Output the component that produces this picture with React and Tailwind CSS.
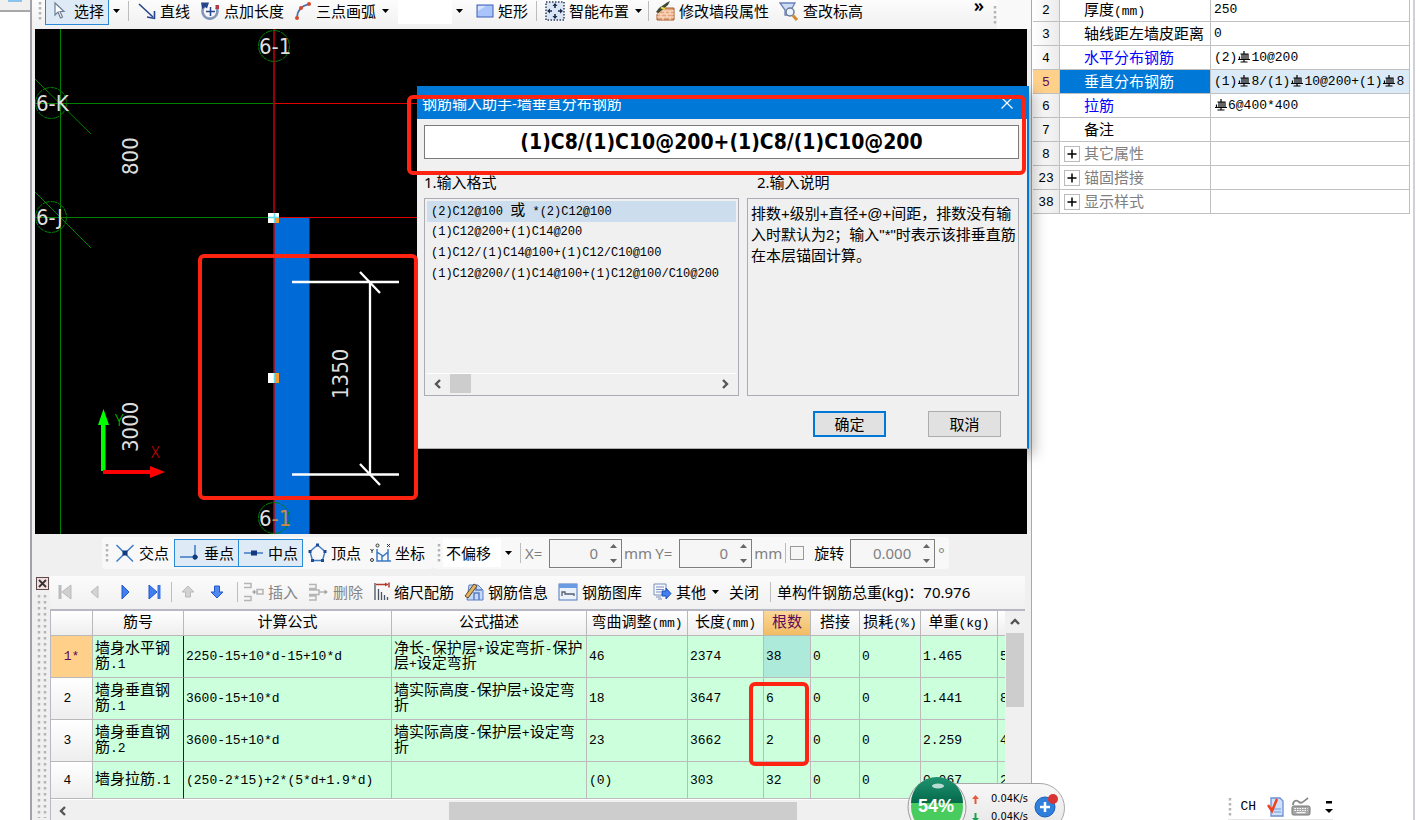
import { useState } from 'react';
import clsx from 'clsx';

const properties = [
  { no: '2', name: '厚度(mm)', value: '250' },
  { no: '3', name: '轴线距左墙皮距离', value: '0' },
  { no: '4', name: '水平分布钢筋', value: '(2)Φ10@200', key: true },
  { no: '5', name: '垂直分布钢筋', value: '(1)Φ8/(1)Φ10@200+(1)Φ8', key: true },
  { no: '6', name: '拉筋', value: 'Φ6@400*400', key: true },
  { no: '7', name: '备注', value: '' },
  { no: '8', name: '其它属性', value: '', group: true },
  { no: '23', name: '锚固搭接', value: '', group: true },
  { no: '38', name: '显示样式', value: '', group: true },
];

const columns = [
  { label: '筋号', width: 'w-[91px]' },
  { label: '计算公式', width: 'w-[208px]' },
  { label: '公式描述', width: 'w-[195px]' },
  { label: '弯曲调整(mm)', width: 'w-[101px]' },
  { label: '长度(mm)', width: 'w-[76px]' },
  { label: '根数', width: 'w-[47px]' },
  { label: '搭接', width: 'w-[49px]' },
  { label: '损耗(%)', width: 'w-[61px]' },
  { label: '单重(kg)', width: 'w-[77px]' },
  { label: '', width: 'w-[20px]' },
];

const bars = [
  ['墙身水平钢筋.1', '2250-15+10*d-15+10*d', '净长-保护层+设定弯折-保护层+设定弯折', '46', '2374', '38', '0', '0', '1.465', '5'],
  ['墙身垂直钢筋.1', '3600-15+10*d', '墙实际高度-保护层+设定弯折', '18', '3647', '6', '0', '0', '1.441', '8'],
  ['墙身垂直钢筋.2', '3600-15+10*d', '墙实际高度-保护层+设定弯折', '23', '3662', '2', '0', '0', '2.259', '4'],
  ['墙身拉筋.1', '(250-2*15)+2*(5*d+1.9*d)', '', '(0)', '303', '32', '0', '0', '0.067', '2'],
];

const formats = [
  '(2)C12@100 或 *(2)C12@100',
  '(1)C12@200+(1)C14@200',
  '(1)C12/(1)C14@100+(1)C12/C10@100',
  '(1)C12@200/(1)C14@100+(1)C12@100/C10@200',
];

/* Latin in a fixed pitch, Chinese at full size, Φ as the rebar grade mark */
function Mixed({ text }) {
  return text.split(/([\u3000-\u9fff]+|Φ)/).map((part, i) => {
    if (part === 'Φ') return <RebarMark key={i} />;
    if (i % 2 === 1) return <span key={i} className="text-[15px]">{part}</span>;
    return part;
  });
}

function RebarMark() {
  return (
    <svg className="inline-block w-[14px] h-[12px] align-[-2px]" viewBox="0 0 14 12" fill="none" stroke="currentColor" strokeWidth="1.2">
      <path d="M7 0v11.500M3.500 3h7.500v5.500M5 3v5.500M9 3v5.500M2.500 5.500v3M1 8.500h12M3.500 11h7" />
    </svg>
  );
}

function Caret({ className }) {
  return (
    <svg className={clsx('w-[7px] h-[4px] shrink-0', className)} viewBox="0 0 7 4">
      <path d="M0 0h7L3.500 4z" fill="#000" />
    </svg>
  );
}

function Chevron({ d }) {
  return (
    <svg className="w-[10px] h-[12px]" viewBox="0 0 10 12" fill="none" stroke="#555" strokeWidth="2.4">
      <path d={d} />
    </svg>
  );
}

function Grip() {
  return (
    <svg className="w-[4px] h-[20px] shrink-0" viewBox="0 0 4 20">
      <path d="M2 1v19" stroke="#b4b4b4" strokeWidth="2.500" strokeDasharray="2.500 2.500" />
    </svg>
  );
}

function Sep({ className }) {
  return <span className={clsx('w-px h-[20px] bg-[#bdbdbd] shrink-0', className)} />;
}

function Tool({ icon, label, active, caret, disabled, className }) {
  return (
    <button
      type="button"
      disabled={disabled}
      className={clsx(
        'flex items-center gap-[4px] h-[28px] px-[4px] border shrink-0 whitespace-nowrap',
        active ? 'bg-[#deebf6] border-[#2a8ad8]' : 'border-transparent',
        disabled && 'text-[#858585]',
        className,
      )}
    >
      {icon}
      {label && <span>{label}</span>}
      {caret && <Caret className="ml-[2px]" />}
    </button>
  );
}

function Icon({ children, w = 20 }) {
  return (
    <svg className="h-[20px] shrink-0" width={w} height="20" viewBox={`0 0 ${w} 20`} fill="none">
      {children}
    </svg>
  );
}

const icons = {
  pointer: (
    <Icon w={20}>
      <path d="M5 2v12l3-3 2.500 6 2-1-2.500-5.500h4z" fill="#fff" stroke="#6f7f95" strokeWidth="1.200" />
    </Icon>
  ),
  line: (
    <Icon w={18}>
      <path d="M1 3L15 16" stroke="#27458c" strokeWidth="1.600" />
      <path d="M17 17.500l-8-1.500M16.500 18V10" stroke="#27458c" strokeWidth="1.600" />
    </Icon>
  ),
  pointLength: (
    <Icon w={20}>
      <path d="M4.500 5a7.500 7.500 0 1 0 12 1.500" stroke="#8496b8" strokeWidth="2.600" />
      <path d="M1 1.500h8l-2 6-2-1.500-3 2z" fill="#27458c" />
      <path d="M10.500 6v9M6 10.500h9" stroke="#27458c" strokeWidth="1.500" />
      <rect x="15.500" y="4" width="3.500" height="4" fill="#b23a4a" />
    </Icon>
  ),
  arc: (
    <Icon w={18}>
      <path d="M3 17C3 9 7 5 15 3" stroke="#4a6cb0" strokeWidth="1.500" />
      <circle cx="3" cy="17" r="2" fill="#d8482c" />
      <circle cx="7" cy="7" r="2" fill="#d8482c" />
      <circle cx="15" cy="3" r="2" fill="#d8482c" />
    </Icon>
  ),
  rect: (
    <Icon w={18}>
      <rect x="1" y="4" width="16" height="12" fill="#a9c4fb" stroke="#3e5fb8" />
      <path d="M2 10l8-5H2z" fill="#d5e3ff" />
    </Icon>
  ),
  smart: (
    <Icon w={20}>
      <rect x="1" y="1" width="18" height="18" fill="#dbe6f5" stroke="#33405c" strokeWidth="1.500" strokeDasharray="1.500 1.500" />
      <path d="M10 3v4M10 13v4M3 10h4M13 10h4" stroke="#1d2c50" strokeWidth="1.600" />
      <path d="M10 2l2.500 3h-5zM10 18l2.500-3h-5zM2 10l3-2.500v5zM18 10l-3-2.500v5z" fill="#1d2c50" />
    </Icon>
  ),
  brick: (
    <Icon w={20}>
      <path d="M8 7h11v12H2v-6z" fill="#e9a57a" stroke="#a45a2c" />
      <path d="M2 13h17M2 16h17M7 10h12M10 10v3M15 10v3M6 13v3M12 13v3M8 16v3M15 16v3" stroke="#fbe6d6" />
      <path d="M1 11l3-4 8-5.500 3-1.500-2 4-6 5-4 3z" fill="#3c4a33" />
      <path d="M6 6.500l4 1.500" stroke="#e4d34a" strokeWidth="2" />
    </Icon>
  ),
  query: (
    <Icon w={20}>
      <path d="M1 2h15l-4 7v5H6V9z" fill="#cfdcf5" stroke="#6c83b8" strokeWidth="1.300" />
      <circle cx="11" cy="11" r="4" fill="#eaf3ff" stroke="#6c7b93" strokeWidth="1.500" />
      <path d="M14 14.500l4 4.500" stroke="#d18b2c" strokeWidth="3" />
    </Icon>
  ),
  cross: (
    <Icon w={20}>
      <path d="M1.500 2L18 18.500M18.500 2L1.500 18.500" stroke="#3c7ac4" strokeWidth="1.500" />
      <rect x="7.500" y="7.500" width="5" height="5" fill="#123a7c" />
    </Icon>
  ),
  perp: (
    <Icon w={21}>
      <path d="M1 14h18M16 2v15" stroke="#3c7ac4" strokeWidth="1.500" />
      <circle cx="16" cy="14" r="2.500" fill="#123a7c" />
    </Icon>
  ),
  mid: (
    <Icon w={21}>
      <path d="M1 10h19" stroke="#3c7ac4" strokeWidth="1.500" />
      <rect x="8" y="7.500" width="6" height="5" fill="#123a7c" />
    </Icon>
  ),
  vertex: (
    <Icon w={19}>
      <path d="M9.500 2L17 8.500 14.500 17.500h-10L2 8.500z" stroke="#3c7ac4" strokeWidth="1.400" />
      <path d="M8 .5h3v3H8zM15.500 7h3v3h-3zM13 16h3v3h-3zM3 16h3v3H3zM.5 7h3v3h-3z" fill="#1d4a94" />
    </Icon>
  ),
  coord: (
    <Icon w={21}>
      <path d="M7 6v12h14M7 9l6 4 5-4M12 13v5M18 6v12" stroke="#3c7ac4" strokeWidth="1.500" />
      <circle cx="7.500" cy="2.500" r="1.500" stroke="#333" />
      <circle cx="2" cy="17" r="1.500" stroke="#333" />
      <path d="M17 1l3 3M20 1l-3 3M.5 6L2 8l1.500-2M2 8v2" stroke="#333" />
    </Icon>
  ),
  first: (
    <Icon w={14}>
      <path d="M13 3v14L4 10z" fill="#cfcfcf" stroke="#bbb" />
      <path d="M2 3v14" stroke="#bbb" strokeWidth="3" />
    </Icon>
  ),
  prev: (
    <Icon w={14}>
      <path d="M10 4v12L3 10z" fill="#d4d4d4" stroke="#bbb" />
    </Icon>
  ),
  next: (
    <Icon w={14}>
      <path d="M4 3v14l7-7z" fill="#3f7ff0" stroke="#1e56cc" />
    </Icon>
  ),
  last: (
    <Icon w={14}>
      <path d="M1 3v14l8-7z" fill="#3f7ff0" stroke="#1e56cc" />
      <path d="M11 3v14" stroke="#3a74e4" strokeWidth="3" />
    </Icon>
  ),
  up: (
    <Icon w={14}>
      <path d="M7 4l6 6h-3.500v5h-5v-5H1z" fill="#d2d2d2" stroke="#bbb" />
    </Icon>
  ),
  down: (
    <Icon w={14}>
      <path d="M7 16l6-6H9.500V4h-5v6H1z" fill="#4e8af0" stroke="#2458cc" />
    </Icon>
  ),
  insert: (
    <Icon w={21}>
      <path d="M1 1.500h7v4H1M1 14.500h7v4H1M10 10h5" stroke="#b5b5b5" strokeWidth="1.500" />
      <path d="M9 10l3-2.500v5z" fill="#a5a5a5" />
      <rect x="14" y="7.500" width="6" height="4.500" stroke="#b5b5b5" strokeWidth="1.500" />
    </Icon>
  ),
  remove: (
    <Icon w={21}>
      <path d="M1 2.500h7v4H1M1 14h7v4H1M1 8h10v4.500H1M11 10h7" stroke="#b5b5b5" strokeWidth="1.500" />
      <path d="M20 10l-3.500-2.500v5z" fill="#a5a5a5" />
    </Icon>
  ),
  scale: (
    <Icon w={17}>
      <path d="M2 1v17M5.500 7v11M8.500 10v8M11.500 13v5M14.500 15v3" stroke="#4a5464" strokeWidth="1.300" />
      <path d="M3 2.500h12M16 .5v5" stroke="#b23a2c" strokeWidth="1.500" />
      <path d="M15 2.500l-3-2v4z" fill="#b23a2c" />
    </Icon>
  ),
  info: (
    <Icon w={20}>
      <path d="M5 3h9l5 5v10H3z" fill="#c4d8f8" stroke="#5b7fc4" />
      <path d="M12 3v5h6M10 18v-7h5v7" stroke="#5b7fc4" strokeWidth="1.500" />
      <path d="M1 14L10 2l3 2L4 16z" fill="#e3b65c" stroke="#5c4632" />
    </Icon>
  ),
  library: (
    <Icon w={20}>
      <rect x="1" y="2" width="18" height="16" fill="#eaf1fb" stroke="#4f77bd" />
      <path d="M1 2h18v4H1z" fill="#6a9ae2" />
      <path d="M4 14v-4h3v2h9v2" stroke="#555e70" strokeWidth="1.300" />
    </Icon>
  ),
  other: (
    <Icon w={20}>
      <path d="M2 2h12v11H2z" fill="#f4f8ff" stroke="#7a8fb8" />
      <path d="M4 5h8M4 7.500h8M4 10h5M4 15h5M6 17h4" stroke="#7a8fb8" />
      <path d="M10 9h4V6l5 5.500-5 5.500v-3h-4z" fill="#3f7ff0" stroke="#1e4fb8" />
    </Icon>
  ),
};

function DrawToolbar() {
  return (
    <div className="flex items-center h-[29px] pl-[6px] overflow-hidden bg-gradient-to-b from-[#fcfcfc] to-[#f0f0f0]">
      <div className="flex items-center h-[28px] -mt-[8px]">
        <Grip />
        <Tool icon={icons.pointer} label="选择" active className="ml-[3px]" />
        <Caret className="mx-[4px]" />
        <Sep className="mx-[4px]" />
        <Tool icon={icons.line} label="直线" />
        <Tool icon={icons.pointLength} label="点加长度" />
        <Tool icon={icons.arc} label="三点画弧" caret />
        <div className="flex items-center h-[26px] ml-[4px] mr-[4px]">
          <input aria-label="弧半径" className="w-[54px] h-full bg-white outline-none" />
          <button type="button" className="w-[15px] h-full flex items-center justify-center"><Caret /></button>
        </div>
        <Tool icon={icons.rect} label="矩形" />
        <Sep className="mx-[3px]" />
        <Tool icon={icons.smart} label="智能布置" caret />
        <Sep className="mx-[1px]" />
        <Tool icon={icons.brick} label="修改墙段属性" />
        <Tool icon={icons.query} label="查改标高" />
      </div>
      <button type="button" className="ml-auto mr-[9px] self-start text-[18px] leading-[10px] font-semibold">»</button>
      <Grip />
      <span className="w-[34px] h-full bg-[#f9f9f9]" />
    </div>
  );
}

function GridBubble({ x, y, children }) {
  return (
    <>
      <circle cx={x} cy={y} r="15.500" stroke="#008000" strokeDasharray="7 1" fill="none" />
      {children}
    </>
  );
}

function DrawingCanvas() {
  return (
    <div className="flex-1 min-h-0 ml-[3px] mr-[4px] bg-black overflow-hidden">
      <svg className="block w-full h-full font-['DejaVu_Sans_Condensed','DejaVu_Sans',sans-serif]" fontSize="22" fill="#dedede">
        <g transform="translate(-35 -29)">
          <rect x="274" y="218" width="35.500" height="600" fill="#006ad6" />
          <g fill="none" stroke="#008000">
            <path d="M60.500 29v800" />
            <path d="M35 103.500h239" />
            <path d="M35 217.500h239" />
            <path d="M35 79l56 55" />
            <path d="M35 192l56 56" />
          </g>
          <g fill="none" stroke="#e00000">
            <path d="M274 103.500h1400" />
            <path d="M274 217.500h1400" />
            <path d="M274 29v800" stroke="#c0000c" strokeWidth="1.500" />
          </g>

          <GridBubble x={274} y={46}><text x="259" y="54">6-1</text></GridBubble>
          <GridBubble x={51} y={103}><text x="36" y="111">6-K</text></GridBubble>
          <GridBubble x={51} y={217}><text x="36" y="225">6-J</text></GridBubble>
          <GridBubble x={274} y={518}>
            <text x="259" y="526">6<tspan fill="#c98a4a">-1</tspan></text>
          </GridBubble>

          <g fontSize="16" className="font-['Open_Sans'] font-light">
            <text x="115" y="426" fill="#00d800">Y</text>
            <text x="151" y="458" fill="#e00000">X</text>
          </g>
          <text transform="translate(138 175) rotate(-90)">800</text>
          <text transform="translate(138 452) rotate(-90)">3000</text>
          <text transform="translate(348 399) rotate(-90)">1350</text>

          <g fill="none" stroke="#fff" strokeWidth="2.300">
            <path d="M292 282h107M292 474.500h107M370 282v192" />
            <path d="M360 272l20 21M360 464l20 21" />
          </g>

          <path d="M101 471v-46h-3l5.500-16 5.500 16h-3.500v46z" fill="#00ff00" />
          <path d="M103 470h47v-4l15 6-15 6v-4h-47z" fill="#ff0000" />

          <rect x="268" y="213" width="11" height="10" fill="#fff" />
          <path d="M274.500 213v10M268 217.500h11" fill="none" stroke="#5fe0e8" strokeWidth="1.500" />
          <rect x="275" y="218" width="4" height="5" fill="#ff9a2a" />
          <rect x="268" y="373" width="11" height="10" fill="#fff" />
          <path d="M274.500 373v10" fill="none" stroke="#5fe0e8" strokeWidth="1.500" />
          <rect x="275" y="373" width="4" height="10" fill="#ff9a2a" />
        </g>
      </svg>
    </div>
  );
}

function Spin({ id, value, width }) {
  const [text, setText] = useState(value);
  return (
    <div className={clsx('flex items-center h-[29px] border border-[#7e7e7e] bg-[#f6f6f6]', width)}>
      <input
        id={id}
        value={text}
        onChange={e => setText(e.target.value)}
        className="flex-1 min-w-0 text-right pr-[9px] bg-transparent outline-none"
      />
      <svg className="w-[14px] h-[22px] shrink-0" viewBox="0 0 14 22" fill="#666">
        <path d="M3 6h7L6.500 2zM3 17h7l-3.500 4z" />
      </svg>
    </div>
  );
}

function SnapToolbar() {
  return (
    <div className="flex items-center h-[42px] pl-[70px] pb-[4px]">
      <div className="flex items-center h-[32px] px-[3px] rounded bg-[#f8f8f8]">
        <Grip />
        <Tool icon={icons.cross} label="交点" className="ml-[1px]" />
        <Tool icon={icons.perp} label="垂点" active />
        <Tool icon={icons.mid} label="中点" active className="-ml-px" />
        <Tool icon={icons.vertex} label="顶点" />
        <Tool icon={icons.coord} label="坐标" className="-ml-px" />
      </div>
      <div className="flex items-center h-[32px] pl-[4px] pr-[4px] rounded bg-[#f8f8f8] text-[#808080]">
        <Grip />
        <div className="flex items-center h-[28px] ml-[2px]">
          <select aria-label="偏移" className="w-[58px] h-full pl-[3px] appearance-none bg-white text-black outline-none">
            <option>不偏移</option>
          </select>
          <Caret className="mx-[4px]" />
        </div>
        <Sep className="mx-[4px]" />
        <label htmlFor="off-x" className="w-[24px]">X=</label>
        <Spin id="off-x" value="0" width="w-[73px]" />
        <span className="ml-[2px] mr-[3px]">mm</span>
        <label htmlFor="off-y" className="w-[24px]">Y=</label>
        <Spin id="off-y" value="0" width="w-[73px]" />
        <span className="ml-[2px] mr-[3px]">mm</span>
        <Sep className="mr-[4px]" />
        <input id="rotate" type="checkbox" className="appearance-none w-[14px] h-[14px] border border-[#999] bg-[#f6f6f6]" />
        <label htmlFor="rotate" className="ml-[10px] mr-[6px] text-black">旋转</label>
        <Spin id="angle" value="0.000" width="w-[85px]" />
        <label htmlFor="angle" className="ml-[3px]">°</label>
      </div>
    </div>
  );
}

function RebarToolbar() {
  return (
    <div className="flex items-center h-[32px] overflow-hidden bg-gradient-to-b from-[#fbfbfb] to-[#f1f1f1]">
      <div className="flex items-center gap-[6px] pl-[3px]">
        <Tool icon={icons.first} disabled />
        <Tool icon={icons.prev} disabled />
        <Tool icon={icons.next} />
        <Tool icon={icons.last} />
      </div>
      <Sep className="mx-[4px]" />
      <div className="flex items-center gap-[5px]">
        <Tool icon={icons.up} disabled />
        <Tool icon={icons.down} />
      </div>
      <Sep className="ml-[8px]" />
      <Tool icon={icons.insert} label="插入" disabled />
      <Tool icon={icons.remove} label="删除" disabled />
      <Tool icon={icons.scale} label="缩尺配筋" />
      <Tool icon={icons.info} label="钢筋信息" />
      <Tool icon={icons.library} label="钢筋图库" />
      <Tool icon={icons.other} label="其他" caret />
      <Tool label="关闭" />
      <Sep className="mx-[6px]" />
      <span className="whitespace-nowrap">单构件钢筋总重(kg)：70.976</span>
    </div>
  );
}

function RebarTable() {
  return (
    <div className="flex h-[191px] border-l border-t-2 border-[#b8b8c4] bg-white">
      <div className="flex-1 min-w-0 overflow-hidden font-['Liberation_Mono','Noto_Sans_CJK_SC',monospace] text-[13px] leading-[15px]">
        <table className="table-fixed w-[966px] border-separate border-spacing-0">
          <thead>
            <tr className="h-[25px]">
              <th className="w-[42px] border-r border-b border-[#b9b9b9] bg-gradient-to-b from-white to-[#eeeeee]" />
              {columns.map((col, i) => (
                <th
                  key={i}
                  className={clsx(
                    'p-0 border-r border-b border-[#b9b9b9] font-normal whitespace-nowrap bg-gradient-to-b',
                    col.width,
                    col.label === '根数' ? 'from-[#fbd79a] to-[#f1bd62] text-[#5c0a5c]' : 'from-white to-[#eeeeee]',
                  )}
                >
                  <Mixed text={col.label} />
                </th>
              ))}
            </tr>
          </thead>
          <tbody>
            {bars.map((cells, r) => (
              <tr key={r} className={r === 3 ? 'h-[37px]' : 'h-[42px]'}>
                <th
                  className={clsx(
                    'py-0 pl-0 border-r border-b border-[#b9b9b9] font-normal text-center',
                    r === 0 ? 'bg-[#ffd08a] text-[#5c0a5c] pr-0' : 'pr-[8px] bg-gradient-to-b from-white to-[#eeeeee]',
                  )}
                >
                  {r === 0 ? '1*' : r + 1}
                </th>
                {cells.map((cell, c) => (
                  <td
                    key={c}
                    className={clsx(
                      'py-0 pr-0 pl-[2px] border-r border-b border-b-[#bdb9bd] break-all',
                      c === 0 ? 'border-r-[#222]' : 'border-r-[#bdb9bd]',
                      r === 0 && c === 5 ? 'bg-[#aeeada]' : 'bg-[#ccffdc]',
                    )}
                  >
                    <Mixed text={cell} />
                  </td>
                ))}
              </tr>
            ))}
          </tbody>
        </table>
      </div>
      <div className="w-[20px] flex flex-col items-center bg-[#f0f0f0]">
        <span className="h-[22px] flex items-center"><Chevron d="M1 8l4-4 4 4" /></span>
        <span className="w-[18px] h-[74px] bg-[#cdcdcd]" />
      </div>
    </div>
  );
}

function RebarDock() {
  return (
    <div className="flex pr-[6px]">
      <div className="w-[18px] shrink-0 pl-[4px] pt-px">
        <button type="button" aria-label="关闭" className="block w-[13px] h-[13px]">
          <svg viewBox="0 0 13 13">
            <rect x=".5" y=".5" width="12" height="12" fill="#f4dede" stroke="#5c4a4a" />
            <path d="M3 3l7 7M10 3l-7 7" stroke="#333" strokeWidth="1.800" />
          </svg>
        </button>
        <svg className="block w-[12px] h-[225px] mt-[3px]" viewBox="0 0 12 225">
          <path d="M3 2v223M9 2v223" stroke="#b4b4b4" strokeWidth="2.500" strokeDasharray="2.500 3.500" />
        </svg>
      </div>
      <div className="flex-1 min-w-0">
        <RebarToolbar />
        <div className="h-px" />
        <RebarTable />
        <div className="flex items-center h-[20px] pt-[2px] border-l border-[#b8b8c4]">
          <span className="pl-[6px] flex"><Chevron d="M8 2L4 6l4 4" /></span>
          <span className="ml-[382px] w-[348px] h-full bg-[#cdcdcd]" />
        </div>
      </div>
    </div>
  );
}

function InputHelper() {
  const [value, setValue] = useState('(1)C8/(1)C10@200+(1)C8/(1)C10@200');
  const [picked, setPicked] = useState(0);
  return (
    <div className="absolute left-[417px] top-[86px] w-[612px] flex flex-col bg-[#f0f0f0] border-r-2 border-[#0078d7] border-b border-b-[#b0b0b0] shadow-[6px_6px_12px_rgba(0,0,0,0.25)]">
      <div className="flex items-center h-[33px] pl-[5px] pr-[14px] bg-[#0078d7] text-white">
        <h2 className="flex-1">钢筋输入助手-墙垂直分布钢筋</h2>
        <button type="button" aria-label="关闭">
          <svg className="w-[12px] h-[12px]" viewBox="0 0 12 12"><path d="M.5.5l11 11M11.500.5l-11 11" stroke="#fff" strokeWidth="1.200" /></svg>
        </button>
      </div>
      <div className="pt-[6px] pl-[7px] pr-[8px]">
        <input
          aria-label="钢筋"
          value={value}
          onChange={e => setValue(e.target.value)}
          className="w-full h-[34px] border border-[#7a7a7a] bg-white text-center text-[21px] font-bold outline-none font-['DejaVu_Sans_Condensed','Noto_Sans',sans-serif]"
        />
        <div className="flex gap-[8px] mt-[11px]">
          <div className="w-[315px]">
            <h3 className="h-[28px] leading-[24px]">1.输入格式</h3>
            <div className="flex flex-col h-[198px] p-[2px] border border-[#acacb4]">
              <ul role="listbox" aria-label="输入格式" className="flex-1 font-['Liberation_Mono','Noto_Sans_CJK_SC',monospace] text-[12px]">
                {formats.map((f, i) => (
                  <li
                    key={f}
                    role="option"
                    aria-selected={picked === i}
                    onClick={() => setPicked(i)}
                    className={clsx('h-[21px] leading-[21px] pl-[4px] whitespace-nowrap', picked === i && 'bg-[#ccdeed]')}
                  >
                    <Mixed text={f} />
                  </li>
                ))}
              </ul>
              <div className="flex items-center h-[20px] px-[5px] border-t border-white">
                <Chevron d="M8 2L4 6l4 4" />
                <span className="w-[21px] h-[19px] ml-[8px] bg-[#cdcdcd]" />
                <span className="ml-auto flex"><Chevron d="M2 2l4 4-4 4" /></span>
              </div>
            </div>
          </div>
          <div className="flex-1 min-w-0">
            <h3 className="h-[28px] leading-[24px] pl-[10px]">2.输入说明</h3>
            <p className="h-[198px] pt-[4px] pl-[3px] border border-[#acacb4] leading-[21px] whitespace-nowrap font-['Liberation_Sans','Noto_Sans_CJK_SC',sans-serif]">
              排数+级别+直径+@+间距，排数没有输<br />
              入时默认为2；输入"*"时表示该排垂直筋<br />
              在本层锚固计算。
            </p>
          </div>
        </div>
        <div className="flex justify-end gap-[42px] pt-[15px] pr-[18px] pb-[11px]">
          <button type="button" className="w-[73px] h-[26px] border-2 border-[#0078d7] bg-[#e1e1e1]">确定</button>
          <button type="button" className="w-[73px] h-[26px] border border-[#adadad] bg-[#e1e1e1]">取消</button>
        </div>
      </div>
    </div>
  );
}

function PropertyGrid() {
  return (
    <table className="w-full -mt-[2px] table-fixed border-separate border-spacing-0 font-['Liberation_Mono','Noto_Sans_CJK_SC',monospace] text-[13px]">
      <tbody>
        {properties.map(p => {
          const active = p.no === '5';
          return (
            <tr key={p.no} className="h-[24px]">
              <th
                className={clsx(
                  'w-[27px] p-0 border-r border-b border-[#c0c0c0] font-normal text-center',
                  active ? 'bg-[#ffd08a] text-[#5c0a5c]' : 'bg-gradient-to-r from-white to-[#ebebeb]',
                )}
              >
                <div className="h-[23px] leading-[25px]">{p.no}</div>
              </th>
              <td
                className={clsx(
                  'w-[151px] p-0 border-r border-b border-[#c0c0c0] whitespace-nowrap',
                  active && 'bg-[#0078d7] text-white',
                  !active && p.key && 'text-[#0000ff]',
                  p.group && 'text-[#808080]',
                )}
              >
                <div className="flex items-center h-[23px]">
                  <span className="w-[24px] flex justify-center shrink-0">
                    {p.group && (
                      <button type="button" aria-label={p.name} className="w-[16px] h-[16px] border border-[#bbb] bg-white flex items-center justify-center">
                        <svg className="w-[10px] h-[10px]" viewBox="0 0 10 10"><path d="M5 .5v9M.5 5h9" stroke="#000" strokeWidth="1.500" /></svg>
                      </button>
                    )}
                  </span>
                  <span className="pt-[4px]"><Mixed text={p.name} /></span>
                </div>
              </td>
              <td className={clsx('p-0 pl-[3px] border-r border-b border-[#c0c0c0] whitespace-nowrap overflow-hidden', active && 'bg-[#dbeaf7]')}>
                <div className="h-[23px] leading-[24px]"><Mixed text={p.value} /></div>
              </td>
            </tr>
          );
        })}
      </tbody>
    </table>
  );
}

function LanguageBar() {
  return (
    <div className="flex items-center h-[26px] mr-[80px] border-b border-[#e6e6e6] font-['Liberation_Mono',monospace] text-[13px]">
      <Grip />
      <span className="ml-[8px] mr-[11px]">CH</span>
      <svg className="w-[18px] h-[20px] mr-[6px]" viewBox="0 0 18 20">
        <path d="M4 1h9l3 3v15H4z" fill="#cfe0fa" stroke="#6d8fd0" strokeWidth="1.300" />
        <path d="M7 12h7M7 15h7" stroke="#8fb0e8" strokeWidth="1.500" />
        <path d="M1 8l4 6 5-12" fill="none" stroke="#f0421c" strokeWidth="2.500" />
      </svg>
      <svg className="w-[20px] h-[19px] mr-[14px]" viewBox="0 0 20 19" fill="none">
        <rect x="1" y="9" width="18" height="9" rx="1.500" fill="#a6a6a6" stroke="#777" />
        <path d="M3.500 11.500h13M3.500 13.500h13" stroke="#fff" strokeWidth="1.200" strokeDasharray="1.500 1" />
        <path d="M5.500 15.700h9" stroke="#fff" strokeWidth="1.200" />
        <path d="M2 8c0-5 4-5 6-3s4 0 9-4" stroke="#888" strokeWidth="1.800" />
      </svg>
      <svg className="w-[8px] h-[14px]" viewBox="0 0 8 14">
        <path d="M1 1h6v2.500H1zM0 9h8l-4 4z" fill="#000" />
      </svg>
    </div>
  );
}

function SpeedBall() {
  return (
    <div className="absolute left-[907px] top-[776px] flex">
      <div className="absolute left-[30px] right-0 top-[7px] h-[50px] rounded-r-full border border-[#a8a8a8] bg-gradient-to-b from-[#f7f7f7] to-[#e6e6e6]" />
      <svg className="relative w-[60px] h-[62px]" viewBox="0 0 60 62">
        <defs>
          <linearGradient id="ballTop" x1="0" y1="0" x2="0" y2="1">
            <stop offset="0" stopColor="#1f9470" />
            <stop offset="1" stopColor="#04694a" />
          </linearGradient>
        </defs>
        <circle cx="30" cy="31" r="29" fill="#f2f2f2" stroke="#9b9b9b" />
        <circle cx="30" cy="31" r="26" fill="#48cc5e" />
        <path d="M4 27a26 26 0 0 1 52 0z" fill="url(#ballTop)" />
        <ellipse cx="31" cy="10" rx="6" ry="2.500" fill="#fff" opacity=".7" />
        <text x="29" y="36" textAnchor="middle" fontSize="18" fontWeight="600" fill="#fff" fontFamily="Liberation Sans, sans-serif">54%</text>
      </svg>
      <div className="relative w-[98px] pt-[14px] pl-[5px] text-[11px] leading-[18px] font-['DejaVu_Sans_Condensed','Noto_Sans',sans-serif]">
        <div className="flex items-center gap-[12px]">
          <svg className="w-[7px] h-[9px]" viewBox="0 0 7 9"><path d="M3.500 0L7 4H4.500v5h-2V4H0z" fill="#e8583c" /></svg>
          0.04K/s
        </div>
        <div className="flex items-center gap-[12px]">
          <svg className="w-[7px] h-[9px]" viewBox="0 0 7 9"><path d="M3.500 9L7 5H4.500V0h-2v5H0z" fill="#1fa050" /></svg>
          0.04K/s
        </div>
        <svg className="absolute right-[7px] top-[18px] w-[24px] h-[24px]" viewBox="0 0 24 24">
          <circle cx="11" cy="13" r="10" fill="#2f7fdc" stroke="#1c5db4" />
          <path d="M11 8v10M6 13h10" stroke="#fff" strokeWidth="2.500" />
          <circle cx="19" cy="5" r="5" fill="#d93434" />
        </svg>
      </div>
    </div>
  );
}

export default function App() {
  return (
    <div className="relative flex h-screen overflow-hidden bg-white text-black text-[15px] leading-[20px] font-['Noto_Sans','Noto_Sans_CJK_SC',sans-serif]">
      <aside className="w-[30px] shrink-0">
        <div className="h-[12px] pl-[8px] border-b-2 border-[#a8a8a8] bg-[#f0f0f0]">
          <div className="w-[14px] h-[2px] bg-[#8cc4ee]" />
        </div>
      </aside>

      <main className="flex-1 min-w-0 flex flex-col bg-[#f0f0f0] border-l-2 border-[#a0a4aa]">
        <DrawToolbar />
        <DrawingCanvas />
        <SnapToolbar />
        <RebarDock />
      </main>

      <aside className="w-[385px] shrink-0 flex flex-col justify-between border-l border-[#a8a8b0]">
        <div className="flex-1 flex flex-col justify-between mr-[1px] border-r-2 border-[#d0d0d8]">
          <div className="pl-px pr-[3px]"><PropertyGrid /></div>
          <div className="self-end"><LanguageBar /></div>
        </div>
      </aside>

      <InputHelper />
      <SpeedBall />

      {/* markup boxes */}
      <div className="absolute left-[198px] top-[254px] w-[220px] h-[246px] border-4 border-[#ff2412] rounded-md pointer-events-none" />
      <div className="absolute left-[407px] top-[95px] w-[619px] h-[80px] border-4 border-[#ff2412] rounded-md pointer-events-none" />
      <div className="absolute left-[749px] top-[682px] w-[60px] h-[84px] border-4 border-[#ff2412] rounded-md pointer-events-none" />
    </div>
  );
}
